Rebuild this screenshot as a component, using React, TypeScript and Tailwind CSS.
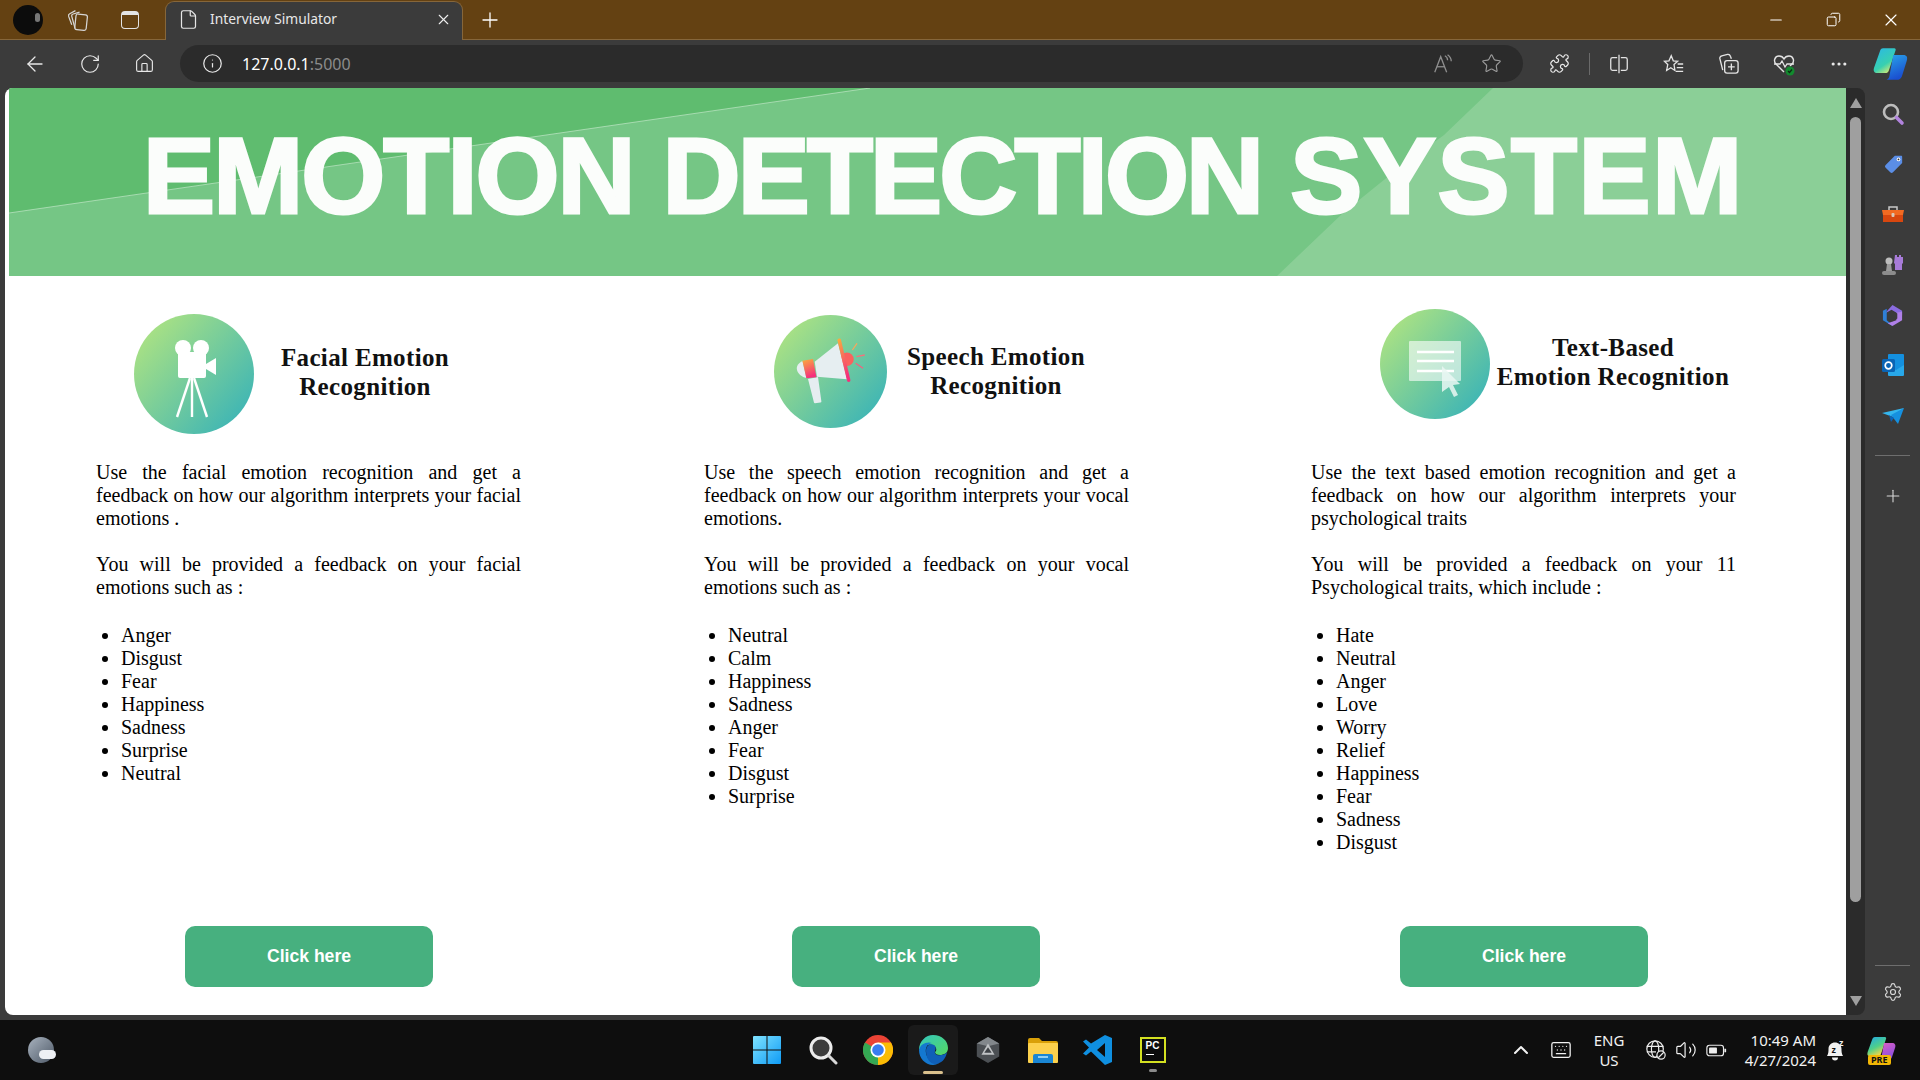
import React from 'react';
import { ArrowLeft, RotateCw, Home, Info, Star, Puzzle, Plus, X, Minus, File, Copy, Settings, ChevronUp, Keyboard, Volume2, MoreHorizontal } from 'lucide-react';

const Grad = ({ id }: { id: string }) => (
    <defs>
        <linearGradient id={id} x1="0.1" y1="0.15" x2="0.9" y2="0.85">
            <stop offset="0" stopColor="#a9e184" />
            <stop offset="1" stopColor="#40b6b4" />
        </linearGradient>
    </defs>
);

const CameraIcon = () => (
    <svg viewBox="0 0 120 120" className="w-[120px] h-[120px] shrink-0">
        <Grad id="g1" />
        <circle cx="60" cy="60" r="60" fill="url(#g1)" />
        <g fill="#fff">
            <circle cx="49" cy="34" r="8" />
            <circle cx="67" cy="34" r="8" />
            <rect x="44" y="38" width="28" height="26" rx="2" />
            <path d="M72 50l10-6v17l-10-6z" />
        </g>
        <g stroke="#fff" strokeWidth="2.4" fill="none">
            <path d="M58 62v41" />
            <path d="M56 64L43 103" />
            <path d="M60 64l13 39" />
        </g>
    </svg>
);

const MegaphoneIcon = () => (
    <svg viewBox="0 0 113 113" className="w-[113px] h-[113px] shrink-0">
        <defs>
            <linearGradient id="mg" x1="0" y1="0" x2="0.3" y2="1">
                <stop offset="0" stopColor="#fbb03b" />
                <stop offset="1" stopColor="#f5307c" />
            </linearGradient>
        </defs>
        <Grad id="g2" />
        <circle cx="56.5" cy="56.5" r="56.5" fill="url(#g2)" />
        <path d="M34 64l10-2 3.400 24.400c0 .6-.4 1-1 1.100l-5.400.7c-.6 0-1-.3-1.100-.9z" fill="#e6edf0" />
        <circle cx="73" cy="44.300" r="6.700" fill="#f9625e" />
        <path d="M40.700 46.700L64 28.300l9 36-30-2.600z" fill="#e6eef1" />
        <path d="M28.500 46c-4 2-6.500 5-5.500 9 1 4 5 7 9.400 8z" fill="#e6eef1" />
        <path d="M28.400 45.700L39 44l3.400 18.300-10 1z" fill="url(#mg)" />
        <path d="M63.500 25.500c-.4-2 2.600-3 3.400-1l9.500 40.500c.4 2-2.500 2.800-3.300 1z" fill="url(#mg)" />
        <g strokeWidth="1.300" fill="none">
            <path d="M78.400 35l4.600-6.700" stroke="#f7a75c" />
            <path d="M82.400 41.700l8.300-1.700" stroke="#f5717d" />
            <path d="M81.700 48.300l7.300 5" stroke="#f5607f" />
        </g>
    </svg>
);

const DocIcon = () => (
    <svg viewBox="0 0 110 110" className="w-[110px] h-[110px] shrink-0">
        <Grad id="g3" />
        <circle cx="55" cy="55" r="55" fill="url(#g3)" />
        <rect x="29" y="32" width="52" height="40" rx="1" fill="#fff" fillOpacity="0.6" />
        <g stroke="#fff" strokeWidth="2.4"><path d="M37 43h37" /><path d="M37 52h37" /><path d="M37 62h37" /></g>
        <path d="M62 57l18 18-7 1 5 10-4 2-5-10-7 5z" fill="#eaf7f3" fillOpacity="0.85" />
    </svg>
);

const Column = ({ head, lines, para2, items, left, indent, btn }: { head: React.ReactNode; lines: string; para2: string; items: string[]; left: string; indent: string; btn: string }) => (
    <div className={`${left} pb-[28px] flex flex-col`}>
        <div className="h-[185px] flex items-start">{head}</div>
        <div className="w-[425px] flex flex-col flex-1 text-[20px] leading-[23px] text-black font-['Liberation_Serif',serif]">
            <p className="text-justify mb-[23px]">{lines}</p>
            <p className="text-justify mb-[25px]">{para2}</p>
            <ul className={`list-disc ${indent}`}>
                {items.map((t) => (
                    <li key={t}>{t}</li>
                ))}
            </ul>
            <button className={`mt-auto ${btn} w-[248px] h-[61px] rounded-[10px] bg-[#47b07f] text-white text-[17.6px] font-bold font-['Liberation_Sans',sans-serif]`}>
                Click here
            </button>
        </div>
    </div>
);

const headingCls = "text-center text-[25px] tracking-[0.35px] font-bold text-[#111] font-['Liberation_Serif',serif]";

const Slot = ({ w, children }: { w: string; children: React.ReactNode }) => (
    <div className={`${w} flex items-center justify-center shrink-0`}>{children}</div>
);

const TabStack = () => (
    <svg viewBox="0 0 24 24" className="w-[25px] h-[25px]" fill="none" stroke="#d6d6d6" strokeWidth="1.2">
        <rect x="10" y="7" width="11" height="15" rx="2" transform="rotate(6 15 14)" />
        <path d="M9.500 20L6.500 9c-.3-1 .3-2 1.300-2.300L14 5" />
        <path d="M6.500 17L3.500 9c-.3-1 0-2 1-2.500L10 3.500" />
    </svg>
);

const SplitIcon = () => (
    <svg viewBox="0 0 24 24" className="w-[22px] h-[22px]" fill="none" stroke="#e4e4e4" strokeWidth="1.4">
        <path d="M10 5H5a2 2 0 0 0-2 2v10a2 2 0 0 0 2 2h5" />
        <path d="M14 5h5a2 2 0 0 1 2 2v10a2 2 0 0 1-2 2h-5" />
        <path d="M12 2v20" />
    </svg>
);

const FavIcon = () => (
    <svg viewBox="0 0 24 24" className="w-[22px] h-[22px]" fill="none" stroke="#e4e4e4" strokeWidth="1.4">
        <path d="M9 3l2.200 5.500L16 9l-4 3.500L13 19l-4.500-3L4 19l1.200-6.500L1.500 9l5-.5z" />
        <path d="M16 12h6M15 16h7M14 20h8" />
    </svg>
);

const CollectionsIcon = () => (
    <svg viewBox="0 0 24 24" className="w-[23px] h-[23px]" fill="none" stroke="#e4e4e4" strokeWidth="1.4">
        <path d="M6 19L3 7c-.3-1.500.5-2.500 2-3l6-1.500c1.500-.3 2.500.5 3 2L15 7" />
        <rect x="8" y="9" width="14" height="13" rx="2.500" />
        <path d="M15 12v7M11.500 15.500h7" />
    </svg>
);

const HeartIcon = () => (
    <svg viewBox="0 0 24 24" className="w-[24px] h-[24px]">
        <path d="M12 20L4 12C1 9 3 4 7 4c2 0 4 1 5 3 1-2 3-3 5-3 4 0 6 5 3 8l-2 2" fill="none" stroke="#e4e4e4" strokeWidth="1.4" />
        <path d="M2 12h6l2-3 3 6 2-3h7" fill="none" stroke="#e4e4e4" strokeWidth="1.300" />
        <circle cx="18" cy="19" r="4.500" fill="#128a2e" />
        <path d="M16 19l1.500 1.500 2.500-3" fill="none" stroke="#0c2a12" strokeWidth="1.200" />
    </svg>
);

const ReadAloud = () => (
    <svg viewBox="0 0 24 24" className="w-[22px] h-[22px]" fill="none" stroke="#8f8f8f" strokeWidth="1.4">
        <path d="M3 21L9.500 4 16 21" />
        <path d="M5.500 15h8" />
        <path d="M14 3c2 1 3 3 3 5M17 2c2 1.500 4 3.500 4 7" />
    </svg>
);

const CopilotIcon = () => (
    <svg viewBox="0 0 32 32" className="w-[36px] h-[36px]">
        <defs>
            <linearGradient id="cp1" x1="0" y1="0" x2="0.6" y2="1">
                <stop offset="0" stopColor="#2ab7e8" />
                <stop offset="0.7" stopColor="#38d0b0" />
                <stop offset="1" stopColor="#c6e87a" />
            </linearGradient>
            <linearGradient id="cp2" x1="0" y1="0" x2="0.4" y2="1">
                <stop offset="0" stopColor="#2aa7ea" />
                <stop offset="1" stopColor="#1a4fd0" />
            </linearGradient>
        </defs>
        <path d="M9 2h10c1 0 1.500 1 1 2l-6 18c-.5 1.500-1.500 2-3 2H4c-3 0-4-2-3-5L6 5c.5-2 1.500-3 3-3z" fill="url(#cp1)" />
        <path d="M18 8h9c3 0 4 2 3 5l-4 13c-.5 2-2 4-3.500 4H11c1.500 0 3-1 3.500-3z" fill="url(#cp2)" />
    </svg>
);

const CopilotPre = () => (
    <svg viewBox="0 0 30 28" className="w-[30px] h-[28px]">
        <defs>
            <linearGradient id="pr1" x1="0" y1="0" x2="0.5" y2="1">
                <stop offset="0" stopColor="#1fa8e8" />
                <stop offset="0.6" stopColor="#4fd08a" />
                <stop offset="1" stopColor="#f0d64a" />
            </linearGradient>
            <linearGradient id="pr2" x1="0" y1="0" x2="0.5" y2="1">
                <stop offset="0" stopColor="#e45fc0" />
                <stop offset="1" stopColor="#8a4fe0" />
            </linearGradient>
        </defs>
        <path d="M8 1h10c1 0 1.500 1 1 2l-5 15c-.5 1.500-1.500 2-3 2H3c-3 0-3-2-2-5L5 4c.5-2 1.500-3 3-3z" fill="url(#pr1)" />
        <path d="M17 7h8c3 0 4 2 3 5l-3 9c-.5 2-2 3-3.500 3H11c1.500 0 3-1 3.500-3z" fill="url(#pr2)" />
    </svg>
);

const SideSearch = () => (
    <svg viewBox="0 0 24 24" className="w-[24px] h-[24px]" fill="none">
        <circle cx="10" cy="10" r="7" stroke="#bdbdbd" strokeWidth="2.6" />
        <path d="M15.500 15.500l5.500 5.500" stroke="#b183dd" strokeWidth="3.600" strokeLinecap="round" />
    </svg>
);

const TagIcon = () => (
    <svg viewBox="0 0 24 24" className="w-[22px] h-[22px]">
        <path d="M14 3h7c.5 0 1 .5 1 1v7L12 21c-1 1-2 1-3 0l-5-5c-1-1-1-2 0-3z" fill="#5b8ee6" />
        <circle cx="18" cy="7" r="2" fill="#fff" /><circle cx="18" cy="7" r="1" fill="#333" />
    </svg>
);

const ToolboxIcon = () => (
    <svg viewBox="0 0 24 24" className="w-[24px] h-[24px]">
        <path d="M8 7V4h8v3" fill="none" stroke="#c9c9c9" strokeWidth="1.500" />
        <path d="M1 7h22l-1 5H2z" fill="#f26a22" />
        <path d="M2 12h20v7H2z" fill="#d8470f" />
        <rect x="10.500" y="10" width="3" height="4" rx="1" fill="#d9c8b8" />
    </svg>
);

const ChessIcon = () => (
    <svg viewBox="0 0 24 24" className="w-[24px] h-[24px]">
        <path d="M14 2h2v2h2V2h2v2h2V2v8l-1 1v6h-7v-6l-1-1z" fill="#a77bd8" />
        <circle cx="8" cy="8" r="3.500" fill="#bdbdbd" />
        <path d="M6 11h4l1 7H5z" fill="#9a9a9a" />
        <rect x="1" y="18" width="14" height="4" rx="2" fill="#8c8c8c" />
    </svg>
);

const M365Icon = () => (
    <svg viewBox="0 0 24 24" className="w-[23px] h-[23px]">
        <path d="M12 1l10 6v5l-6-3-5-3-7 4z" fill="#8a6be0" />
        <path d="M2 7l4-2v12l5 4 1 2-10-6z" fill="#2f7fd6" />
        <path d="M22 8v9l-10 6-5-3 9-3V9z" fill="#b080e8" />
        <path d="M7 10l5-3 5 3v5l-5 3-5-3z" fill="#3b3b3b" />
    </svg>
);

const OutlookIcon = () => (
    <svg viewBox="0 0 24 24" className="w-[24px] h-[24px]">
        <rect x="7" y="1" width="16" height="20" rx="1" fill="#1490df" />
        <path d="M7 12l8 5 8-5v10a1 1 0 0 1-1 1H8a1 1 0 0 1-1-1z" fill="#28a8ea" />
        <rect x="1" y="6" width="13" height="13" rx="1.500" fill="#0a64b4" />
        <circle cx="7.500" cy="12.500" r="3.300" fill="none" stroke="#fff" strokeWidth="1.700" />
    </svg>
);

const SendIcon = () => (
    <svg viewBox="0 0 24 24" className="w-[24px] h-[24px]">
        <path d="M1 9l22-5-11 9z" fill="#34b6ee" />
        <path d="M23 4l-6 16-7-9z" fill="#1590e0" />
        <path d="M8 11l2 7 3-4z" fill="#0b63b8" />
    </svg>
);

const WinIcon = () => (
    <svg viewBox="0 0 30 30" className="w-[30px] h-[30px]">
        <defs>
            <linearGradient id="win" x1="0" y1="0" x2="1" y2="1">
                <stop offset="0" stopColor="#7fe3ff" />
                <stop offset="1" stopColor="#0f9bf5" />
            </linearGradient>
        </defs>
        <path d="M1 2a1 1 0 0 1 1-1h12.500v13.500H1zM15.500 1H28a1 1 0 0 1 1 1v12.500H15.500zM1 15.500h13.500V29H2a1 1 0 0 1-1-1zM15.500 15.500H29V28a1 1 0 0 1-1 1H15.500z" fill="url(#win)" />
    </svg>
);

const TaskSearch = () => (
    <svg viewBox="0 0 30 30" className="w-[30px] h-[30px]">
        <circle cx="13" cy="13" r="10" fill="#3c3c3c" stroke="#ececec" strokeWidth="3" />
        <path d="M21 21l7 7" stroke="#d8d8d8" strokeWidth="3" strokeLinecap="round" />
    </svg>
);

const ChromeIcon = () => (
    <svg viewBox="0 0 30 30" className="w-[30px] h-[30px]">
        <circle cx="15" cy="15" r="15" fill="#ea4335" />
        <path d="M15 15L2 7.500A15 15 0 0 0 15 30z" fill="#34a853" />
        <path d="M15 15v15A15 15 0 0 0 28 7.500H15z" fill="#fbbc04" />
        <circle cx="15" cy="15" r="7.500" fill="#fff" />
        <circle cx="15" cy="15" r="5.800" fill="#3a7df0" />
    </svg>
);

const EdgeIcon = () => (
    <svg viewBox="0 0 30 30" className="w-[30px] h-[30px]">
        <defs>
            <linearGradient id="edge" x1="0" y1="0" x2="1" y2="1">
                <stop offset="0" stopColor="#33c6c0" />
                <stop offset="1" stopColor="#55d860" />
            </linearGradient>
        </defs>
        <path d="M1 15C1 6 8 0 15 0c9 0 15 6 15 13 0 5-4 7-8 7-3 0-5-1-5-3 2-1 2-5-2-7-6-2-12 2-14 5z" fill="url(#edge)" />
        <path d="M1 15c1-6 8-9 13-7-5 1-7 5-6 10 1 6 7 11 13 10-2 1-4 2-6 2C7 30 1 23 1 15z" fill="#1478d0" />
        <path d="M8 16c0-5 4-8 8-6 2 1 2 4 1 6-1 3 2 5 6 4 2 0 5-1 6-3-1 7-6 12-12 12-5 0-9-6-9-13z" fill="#0f5fb8" />
    </svg>
);

const GemIcon = () => (
    <svg viewBox="0 0 30 30" className="w-[28px] h-[30px]">
        <path d="M15 1l12 7v14l-12 7-12-7V8z" fill="#4c5054" />
        <path d="M15 1l12 7-12 3-12-3z" fill="#82878b" />
        <path d="M15 8l7 12H8z" fill="#c0c3c5" />
        <path d="M15 12l4 6h-8z" fill="#3e4246" />
    </svg>
);

const FolderIcon = () => (
    <svg viewBox="0 0 30 30" className="w-[30px] h-[30px]">
        <path d="M0 5a2 2 0 0 1 2-2h9l3 3h14a2 2 0 0 1 2 2v4H0z" fill="#d9a008" />
        <rect x="0" y="8" width="30" height="20" rx="1" fill="#fcd14d" />
        <path d="M5 28v-7a2 2 0 0 1 2-2h16a2 2 0 0 1 2 2v7z" fill="#1a86d4" />
        <rect x="10" y="21" width="10" height="2" fill="#8fd0f5" />
    </svg>
);

const VsIcon = () => (
    <svg viewBox="0 0 30 30" className="w-[30px] h-[30px]">
        <path d="M22 0l7 3v24l-7 3-14-13.500-5 4-3-2 6-6-6-6 3-2 5 4zM22 8l-8 7 8 7z" fill="#0f8fe0" />
    </svg>
);

const PyCharmIcon = () => (
    <div className="w-[26px] h-[26px] bg-[#0c0c0c] border-[2px] border-[#d3e021] flex flex-col pl-[4px] pt-[1px] text-white text-[10px] leading-[12px] font-bold font-['Liberation_Sans',sans-serif]">
        PC
        <span className="block w-[8px] h-[1px] bg-white mt-[2px]" />
    </div>
);

const Bell = () => (
    <svg viewBox="0 0 24 24" className="w-[24px] h-[24px]">
        <path d="M4 18c1.500-2 1.500-5 1.500-7 0-4 3-6.500 6.500-6.500S18.500 7 18.500 11c0 2 0 5 1.500 7z" fill="#f2f2f2" />
        <path d="M9 19.500a3 3 0 0 0 6 0z" fill="#f2f2f2" />
        <text x="8.500" y="15" fontSize="9" fontWeight="700" fill="#111" fontFamily="Liberation Sans">z</text>
        <text x="16" y="8" fontSize="9" fontWeight="700" fill="#f2f2f2" fontFamily="Liberation Sans">z</text>
    </svg>
);

const Globe = () => (
    <svg viewBox="0 0 24 24" className="w-[22px] h-[22px]" fill="none" stroke="#ededed" strokeWidth="1.300">
        <circle cx="11" cy="11" r="9" />
        <ellipse cx="11" cy="11" rx="4" ry="9" />
        <path d="M2 8h18M2 14h10" />
        <circle cx="17.500" cy="17.500" r="4.500" fill="#0e0e0e" />
        <path d="M14.500 20.500l6-6" />
    </svg>
);

const Battery = () => (
    <svg viewBox="0 0 24 24" className="w-[21px] h-[21px]" fill="none" stroke="#ededed" strokeWidth="1.300">
        <rect x="1" y="6" width="19" height="12" rx="3" />
        <rect x="3.500" y="8.500" width="9" height="7" rx="1" fill="#ededed" stroke="none" />
        <path d="M22 10v4" strokeWidth="2" />
    </svg>
);

const sideIcons = [<TagIcon />, <ToolboxIcon />, <ChessIcon />, <M365Icon />, <OutlookIcon />, <SendIcon />];

const App = () => {
    return (
        <div className="w-[1920px] h-[1080px] overflow-hidden flex flex-col bg-[#3b3b3b] font-['Noto_Sans',sans-serif]">
            {/* title bar */}
            <div className="h-[40px] shrink-0 bg-[#644112] border-b border-[#86663a] flex pl-[13px] text-white">
                <div className="self-center w-[30px] h-[30px] rounded-full bg-[#0c0c0c] overflow-hidden flex items-start justify-end pr-[3px] pt-[8px]">
                    <span className="block w-[5px] h-[9px] rounded-full bg-[#777]" />
                </div>
                <Slot w="w-[28px] ml-[20px]"><TabStack /></Slot>
                <Slot w="w-[28px] ml-[25px]">
                    <div className="w-[18px] h-[18px] rounded-[4px] border-[1.5px] border-[#e4e4e4] border-t-[4px]" />
                </Slot>
                <div className="ml-[21px] mt-[1px] w-[298px] h-[39px] bg-[#3b3b3b] rounded-t-[9px] border-t border-x border-[#86663a] flex items-center pl-[12px] pr-[10px] pb-[3px]">
                    <File size={21} strokeWidth={1.4} className="text-[#e6e6e6]" />
                    <span className="ml-[11px] text-[13.8px] text-[#e8e8e8] flex-1">Interview Simulator</span>
                    <X size={17} strokeWidth={1.6} className="text-[#eee]" />
                </div>
                <Slot w="w-[26px] ml-[14px]"><Plus size={24} strokeWidth={1.3} /></Slot>
                <div className="ml-auto flex">
                    <Slot w="w-[58px]"><Minus size={18} strokeWidth={1.5} /></Slot>
                    <Slot w="w-[57px]"><Copy size={15} strokeWidth={1.6} className="-scale-x-100" /></Slot>
                    <Slot w="w-[58px]"><X size={20} strokeWidth={1.4} /></Slot>
                </div>
            </div>

            {/* toolbar */}
            <div className="h-[48px] shrink-0 flex items-center pl-[7px] pb-[1px] text-[#e8e8e8]">
                <Slot w="w-[55px]"><ArrowLeft size={24} strokeWidth={1.3} /></Slot>
                <Slot w="w-[55px]"><RotateCw size={22} strokeWidth={1.3} /></Slot>
                <Slot w="w-[55px]"><Home size={21} strokeWidth={1.3} /></Slot>
                <div className="ml-[8px] w-[1343px] h-[37px] rounded-full bg-[#2b2b2b] flex items-center pl-[22px] pr-[7px]">
                    <Info size={21} strokeWidth={1.4} />
                    <span className="ml-[19px] flex-1 text-[16px] text-white">
                        127.0.0.1<span className="text-[#8c8c8c]">:5000</span>
                    </span>
                    <Slot w="w-[49px]"><ReadAloud /></Slot>
                    <Slot w="w-[49px]"><Star size={21} strokeWidth={1.3} className="text-[#9a9a9a]" /></Slot>
                </div>
                <Slot w="w-[55px] ml-[9px]"><Puzzle size={21} strokeWidth={1.4} /></Slot>
                <div className="w-[1px] h-[22px] bg-[#6a6a6a] ml-[2px] mr-[1px]" />
                <Slot w="w-[55px]"><SplitIcon /></Slot>
                <Slot w="w-[55px]"><FavIcon /></Slot>
                <Slot w="w-[55px]"><CollectionsIcon /></Slot>
                <Slot w="w-[55px]"><HeartIcon /></Slot>
                <Slot w="w-[55px]"><MoreHorizontal size={20} strokeWidth={1.8} /></Slot>
                <Slot w="w-[50px]"><CopilotIcon /></Slot>
            </div>

            {/* browser body */}
            <div className="h-[927px] shrink-0 flex">
                <div className="ml-[5px] w-[1841px] bg-white rounded-l-[8px] overflow-hidden flex flex-col">
                    <div className="relative ml-[4px] h-[188px] shrink-0 bg-[#75c685] overflow-hidden flex items-start">
                        <svg viewBox="0 0 1837 188" className="absolute inset-0 w-full h-full">
                            <polygon points="0,125 861,0 0,0" fill="#5fbc6f" />
                            <path d="M1484,0 L1435,47 L1386,83 L1334,125 L1268,188 L1837,188 L1837,0 Z" fill="#8bcf97" />
                            <path d="M0,125 L861,0" stroke="#d8f0dc" strokeOpacity="0.55" strokeWidth="1" fill="none" />
                        </svg>
                        <h1 className="relative ml-[134px] mt-[26px] text-[108px] leading-[124px] font-bold text-[#fbfdfb] whitespace-nowrap tracking-[-1.2px] [-webkit-text-stroke:3px_#fbfdfb] font-['Liberation_Sans',sans-serif]">
                            <span className="tracking-[-1.9px]">EMOTION</span> <span className="tracking-[-2.8px]">DETECTION</span> <span className="tracking-[1.6px]">SYSTEM</span>
                        </h1>
                    </div>
                    <div className="flex-1 pl-[3px] grid grid-cols-[607px_607px_607px]">
                        <Column
                            left="pl-[88px]"
                            indent="pl-[25px]"
                            btn="ml-[89px]"
                            head={
                                <>
                                    <div className="ml-[38px] mt-[38px]"><CameraIcon /></div>
                                    <h2 className={`${headingCls} w-[220px] ml-[1px] mt-[67px] leading-[29px]`}>Facial Emotion<br />Recognition</h2>
                                </>
                            }
                            lines="Use the facial emotion recognition and get a feedback on how our algorithm interprets your facial emotions ."
                            para2="You will be provided a feedback on your facial emotions such as :"
                            items={['Anger', 'Disgust', 'Fear', 'Happiness', 'Sadness', 'Surprise', 'Neutral']}
                        />
                        <Column
                            left="pl-[89px]"
                            indent="pl-[24px]"
                            btn="ml-[88px]"
                            head={
                                <>
                                    <div className="ml-[70px] mt-[39px]"><MegaphoneIcon /></div>
                                    <h2 className={`${headingCls} w-[218px] mt-[66px] leading-[29px]`}>Speech Emotion<br />Recognition</h2>
                                </>
                            }
                            lines="Use the speech emotion recognition and get a feedback on how our algorithm interprets your vocal emotions."
                            para2="You will be provided a feedback on your vocal emotions such as :"
                            items={['Neutral', 'Calm', 'Happiness', 'Sadness', 'Anger', 'Fear', 'Disgust', 'Surprise']}
                        />
                        <Column
                            left="pl-[89px]"
                            indent="pl-[25px]"
                            btn="ml-[89px]"
                            head={
                                <>
                                    <div className="ml-[69px] mt-[33px]"><DocIcon /></div>
                                    <h2 className={`${headingCls} w-[246px] mt-[57px] leading-[29px]`}>Text-Based<br />Emotion Recognition</h2>
                                </>
                            }
                            lines="Use the text based emotion recognition and get a feedback on how our algorithm interprets your psychological traits"
                            para2="You will be provided a feedback on your 11 Psychological traits, which include :"
                            items={['Hate', 'Neutral', 'Anger', 'Love', 'Worry', 'Relief', 'Happiness', 'Fear', 'Sadness', 'Disgust']}
                        />
                    </div>
                </div>

                {/* scrollbar */}
                <div className="w-[19px] bg-[#2b2b2b] rounded-r-[8px] flex flex-col items-center pt-[10px] pb-[9px]">
                    <div className="w-0 h-0 border-x-[6px] border-x-transparent border-b-[10px] border-b-[#9f9f9f]" />
                    <div className="mt-[9px] w-[11px] h-[785px] rounded-full bg-[#9f9f9f]" />
                    <div className="mt-auto w-0 h-0 border-x-[6px] border-x-transparent border-t-[10px] border-t-[#9f9f9f]" />
                </div>

                {/* side panel */}
                <div className="flex-1 flex flex-col items-center pt-[14px] text-[#d8d8d8]">
                    <Slot w="h-[24px]"><SideSearch /></Slot>
                    {sideIcons.map((icon, i) => (
                        <div key={i} className="h-[24px] mt-[26.3px] flex items-center justify-center">{icon}</div>
                    ))}
                    <div className="w-[35px] h-[1px] bg-[#6e6e6e] mt-[27px]" />
                    <Plus size={20} strokeWidth={1.3} className="mt-[30px]" />
                    <div className="w-[35px] h-[1px] bg-[#6e6e6e] mt-auto mb-[16px]" />
                    <Settings size={20} strokeWidth={1.4} className="mb-[13px]" />
                </div>
            </div>

            <div className="h-[5px] shrink-0" />

            {/* taskbar */}
            <div className="h-[60px] shrink-0 bg-[#0e0e0e] flex items-center text-[#f2f2f2]">
                <div className="w-[739px] pl-[28px] shrink-0">
                    <div className="relative w-[26px] h-[26px] rounded-full bg-gradient-to-br from-[#a9b3bf] to-[#4f5a68]">
                        <span className="absolute left-[11px] top-[13px] w-[17px] h-[9px] rounded-full bg-[#eef0f4]" />
                    </div>
                </div>
                <Slot w="w-[56px]"><WinIcon /></Slot>
                <Slot w="w-[55px]"><TaskSearch /></Slot>
                <Slot w="w-[55px]"><ChromeIcon /></Slot>
                <div className="relative w-[50px] h-[50px] mx-[2.5px] rounded-[6px] bg-[#1a1a1a] flex items-center justify-center">
                    <EdgeIcon />
                    <span className="absolute bottom-[1px] left-[15px] w-[20px] h-[3px] rounded-full bg-[#d9c08d]" />
                </div>
                <Slot w="w-[55px]"><GemIcon /></Slot>
                <Slot w="w-[55px]"><FolderIcon /></Slot>
                <Slot w="w-[55px]"><VsIcon /></Slot>
                <div className="relative w-[55px] flex justify-center">
                    <PyCharmIcon />
                    <span className="absolute -bottom-[9px] left-[24px] w-[8px] h-[3px] rounded-full bg-[#8a8a8a]" />
                </div>
                <div className="ml-[321px] flex items-center">
                    <Slot w="w-[40px]"><ChevronUp size={24} strokeWidth={2} /></Slot>
                    <Slot w="w-[40px]"><Keyboard size={22} strokeWidth={1.4} /></Slot>
                    <div className="w-[56px] text-center text-[15px] leading-[20px]">ENG<br />US</div>
                    <div className="w-[4px]" />
                    <Slot w="w-[30px]"><Globe /></Slot>
                    <Slot w="w-[30px]"><Volume2 size={22} strokeWidth={1.3} /></Slot>
                    <Slot w="w-[30px]"><Battery /></Slot>
                    <div className="w-[85px] text-right text-[15px] leading-[20px]">10:49 AM<br />4/27/2024</div>
                    <Slot w="w-[38px]"><Bell /></Slot>
                    <div className="relative w-[56px] flex justify-center">
                        <CopilotPre />
                        <span className="absolute left-[14px] top-[19px] px-[3px] rounded-[2px] bg-[#f2b705] text-[#111] text-[9px] leading-[10px] font-bold">PRE</span>
                    </div>
                </div>
            </div>
        </div>
    );
};

export default App;
